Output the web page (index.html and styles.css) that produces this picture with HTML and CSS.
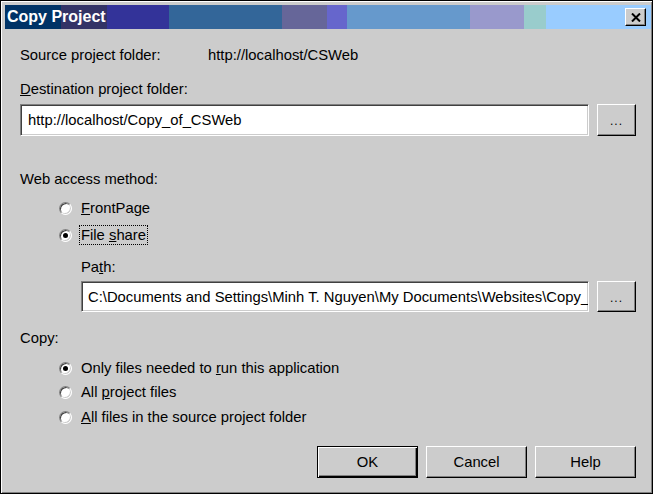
FILE: index.html
```html
<!DOCTYPE html>
<html lang="en">
<head>
    <meta charset="UTF-8">
    <title>Copy Project</title>
    <link rel="stylesheet" href="styles.css">
</head>
<body>

<div class="window">
    <div class="titlebar">
        <span class="title">Copy Project</span>
        <button class="close" type="button">
            <svg width="10" height="9" viewBox="0 0 10 9">
                <path d="M1 0.5 L9 8.5 M9 0.5 L1 8.5" stroke="#000" stroke-width="2" fill="none"/>
            </svg>
        </button>
    </div>

    <div class="content">
        <div class="source-row">
            <span class="source-label">Source project folder:</span>
            <span>http://localhost/CSWeb</span>
        </div>

        <div class="label dest-label"><u>D</u>estination project folder:</div>
        <div class="field-row dest-field">
            <input type="text" class="field" value="http://localhost/Copy_of_CSWeb">
            <button class="browse" type="button">...</button>
        </div>

        <div class="label web-label">Web access method:</div>
        <div class="options web-options">
            <div class="option first"><span class="radio"></span><span><u>F</u>rontPage</span></div>
            <div class="option second"><span class="radio checked"></span><span class="focused">File <u>s</u>hare</span></div>
        </div>

        <div class="path-block">
            <div class="label">Pa<u>t</u>h:</div>
            <div class="field-row path-field">
                <input type="text" class="field" value="C:\Documents and Settings\Minh T. Nguyen\My Documents\Websites\Copy_of_CSWeb">
                <button class="browse" type="button">...</button>
            </div>
        </div>

        <div class="label copy-label">Copy:</div>
        <div class="options copy-options">
            <div class="option first"><span class="radio checked"></span><span>Only files needed to <u>r</u>un this application</span></div>
            <div class="option"><span class="radio"></span><span>All <u>p</u>roject files</span></div>
            <div class="option third"><span class="radio"></span><span><u>A</u>ll files in the source project folder</span></div>
        </div>

        <div class="buttons">
            <button class="btn default" type="button">OK</button>
            <button class="btn" type="button">Cancel</button>
            <button class="btn" type="button">Help</button>
        </div>
    </div>
</div>

</body>
</html>
```

FILE: styles.css
```css
html, body {
    margin: 0;
    padding: 0;
}
body {
    font-family: "Liberation Sans", Arial, sans-serif;
    font-size: 14.8px;
    color: #000;
    background: #cccccc;
}
.window {
    width: 653px;
    height: 494px;
    box-sizing: border-box;
    border: 1px solid #000;
    box-shadow: inset 1px 1px #fff, inset -1px -1px #808080;
    padding: 4px 1px 0 4px;
    background: #cccccc;
}
.titlebar {
    height: 24px;
    display: flex;
    align-items: center;
    justify-content: space-between;
    padding: 0 5px 0 2px;
    background: linear-gradient(to right,
        #003366 0, #003366 56px,
        #333366 56px, #333366 102px,
        #333399 102px, #333399 164px,
        #336699 164px, #336699 277px,
        #666699 277px, #666699 322px,
        #6666cc 322px, #6666cc 342px,
        #6699cc 342px, #6699cc 465px,
        #9999cc 465px, #9999cc 519px,
        #99cccc 519px, #99cccc 541px,
        #99ccff 541px, #99ccff 100%);
}
.title {
    color: #fff;
    font-weight: bold;
    font-size: 16px;
}
.close {
    width: 21px;
    height: 18px;
    padding: 0;
    display: flex;
    align-items: center;
    justify-content: center;
    background: #cccccc;
    border: 1px solid;
    border-color: #fff #000 #000 #fff;
    box-shadow: inset -1px -1px #808080;
}
.content {
    padding: 17px 15px 0 15px;
}
.source-row {
    display: flex;
    height: 18px;
    line-height: 18px;
}
.source-label {
    width: 188px;
}
.label {
    height: 18px;
    line-height: 18px;
}
.dest-label {
    margin-top: 16px;
}
.field-row {
    display: flex;
    align-items: stretch;
    gap: 8px;
}
.dest-field {
    margin-top: 6px;
    height: 32px;
}
.field {
    flex: 1;
    min-width: 0;
    margin: 0;
    box-sizing: border-box;
    font-family: inherit;
    font-size: 14.8px;
    padding: 0 0 0 7px;
    background: #fff;
    border: 1px solid;
    border-color: #808080 #fff #fff #808080;
    box-shadow: inset 1px 1px #404040, inset -1px -1px #cccccc;
    outline: none;
    color: #000;
}
.browse {
    width: 39px;
    margin: 0;
    padding: 2px 0 0 0;
    font-family: inherit;
    font-size: 12px;
    letter-spacing: 1px;
    background: #cccccc;
    border: 1px solid;
    border-color: #fff #000 #000 #fff;
    box-shadow: inset -1px -1px #808080;
}
.web-label {
    margin-top: 34px;
}
.options {
    padding-left: 39px;
}
.option {
    display: flex;
    align-items: center;
    height: 18px;
    line-height: 18px;
    margin-top: 7px;
}
.option.first {
    margin-top: 11px;
}
.web-options .second {
    margin-top: 9px;
}
.radio {
    position: relative;
    width: 13px;
    height: 13px;
    box-sizing: border-box;
    border-radius: 50%;
    background: #fff;
    border: 1px solid;
    border-color: #808080 #fff #fff #808080;
    box-shadow: inset 1px 1px #404040, inset -1px -1px #cccccc;
    margin-right: 9px;
    flex: none;
}
.radio.checked::after {
    content: "";
    position: absolute;
    left: 3px;
    top: 3px;
    width: 5px;
    height: 5px;
    border-radius: 50%;
    background: #000;
}
.focused {
    outline: 1px dotted #000;
    outline-offset: 0;
    padding: 0 1px;
    margin-left: -1px;
}
.path-block {
    padding-left: 61px;
    margin-top: 14px;
}
.path-field {
    margin-top: 5px;
    height: 31px;
}
.path-field .field {
    padding-left: 6px;
}
.copy-label {
    margin-top: 17px;
}
.copy-options .option {
    margin-top: 6px;
}
.copy-options .option.first {
    margin-top: 12px;
}
.copy-options .option.third {
    margin-top: 7px;
}
.buttons {
    display: flex;
    justify-content: flex-end;
    gap: 8px;
    margin-top: 20px;
}
.btn {
    width: 101px;
    height: 32px;
    margin: 0;
    font-family: inherit;
    font-size: 14.8px;
    background: #cccccc;
    border: 1px solid;
    border-color: #fff #000 #000 #fff;
    box-shadow: inset -1px -1px #808080;
    color: #000;
}
.btn.default {
    border: 1px solid #000;
    box-shadow: inset 1px 1px #fff, inset -1px -1px #000, inset -2px -2px #808080;
}
```
